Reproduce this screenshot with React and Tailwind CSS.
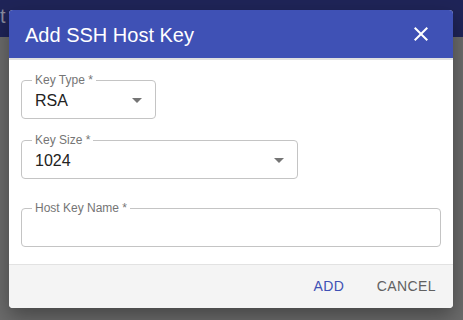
import React from "react";

function Arrow() {
  return (
    <svg width="24" height="24" viewBox="0 0 24 24" className="shrink-0">
      <path d="M7 10l5 5 5-5z" fill="#757575" />
    </svg>
  );
}

function Field({ label, value, width, select }) {
  return (
    <div
      className={`relative h-[39px] rounded-[4px] border border-[#c4c4c4] flex items-center pl-[13px] pr-[6px] ${width}`}
    >
      <span className="absolute left-[10px] top-[-8px] bg-white px-[3px] text-[12px] leading-[14px] text-[#757575]">
        {label}
      </span>
      <span className="flex-1 text-[16px] text-[#222222] leading-none pt-[2px]">{value}</span>
      {select && <Arrow />}
    </div>
  );
}

export default function App() {
  return (
    <div
      className="relative w-[463px] h-[320px] overflow-hidden bg-[#6b6b6b]"
      style={{ fontFamily: "'Liberation Sans', Arial, sans-serif" }}
    >
      <div className="h-[37px] bg-[#1f2458] flex items-start pt-[6px]">
        <span className="ml-0 text-[20px] text-[#8a8c9e] leading-none">t</span>
      </div>
      <div className="absolute left-[9px] top-[10px] w-[444px] h-[298px] rounded-[4px] overflow-hidden bg-white shadow-[0_8px_20px_rgba(0,0,0,0.35)] flex flex-col">
        <div className="h-[48px] bg-[#3f51b5] flex items-center justify-between pl-[16px] pr-[20px]">
          <span className="text-[20px] text-white leading-none pt-[1px]">Add SSH Host Key</span>
          <svg width="24" height="24" viewBox="0 0 24 24">
            <path
              d="M19 6.41 17.59 5 12 10.59 6.41 5 5 6.41 10.59 12 5 17.59 6.41 19 12 13.41 17.59 19 19 17.59 13.41 12z"
              fill="white"
            />
          </svg>
        </div>
        <div className="h-[2px] bg-[#e0e0e0]" />
        <div className="flex-1 flex flex-col px-[12px] pt-[20px]">
          <Field label="Key Type *" value="RSA" width="w-[135px]" select />
          <div className="h-[21px]" />
          <Field label="Key Size *" value="1024" width="w-[277px]" select />
          <div className="h-[29px]" />
          <Field label="Host Key Name *" value="" width="w-[420px]" />
        </div>
        <div className="h-[44px] bg-[#f4f4f4] border-t border-[#e2e2e2] flex items-center justify-end px-[9px] gap-[8px]">
          <button className="min-w-[64px] px-[8px] h-[36px] text-[14px] tracking-[0.4px] text-[#3f51b5] uppercase">
            Add
          </button>
          <button className="min-w-[64px] px-[8px] h-[36px] text-[14px] tracking-[0.4px] text-[#616161] uppercase">
            Cancel
          </button>
        </div>
      </div>
    </div>
  );
}
